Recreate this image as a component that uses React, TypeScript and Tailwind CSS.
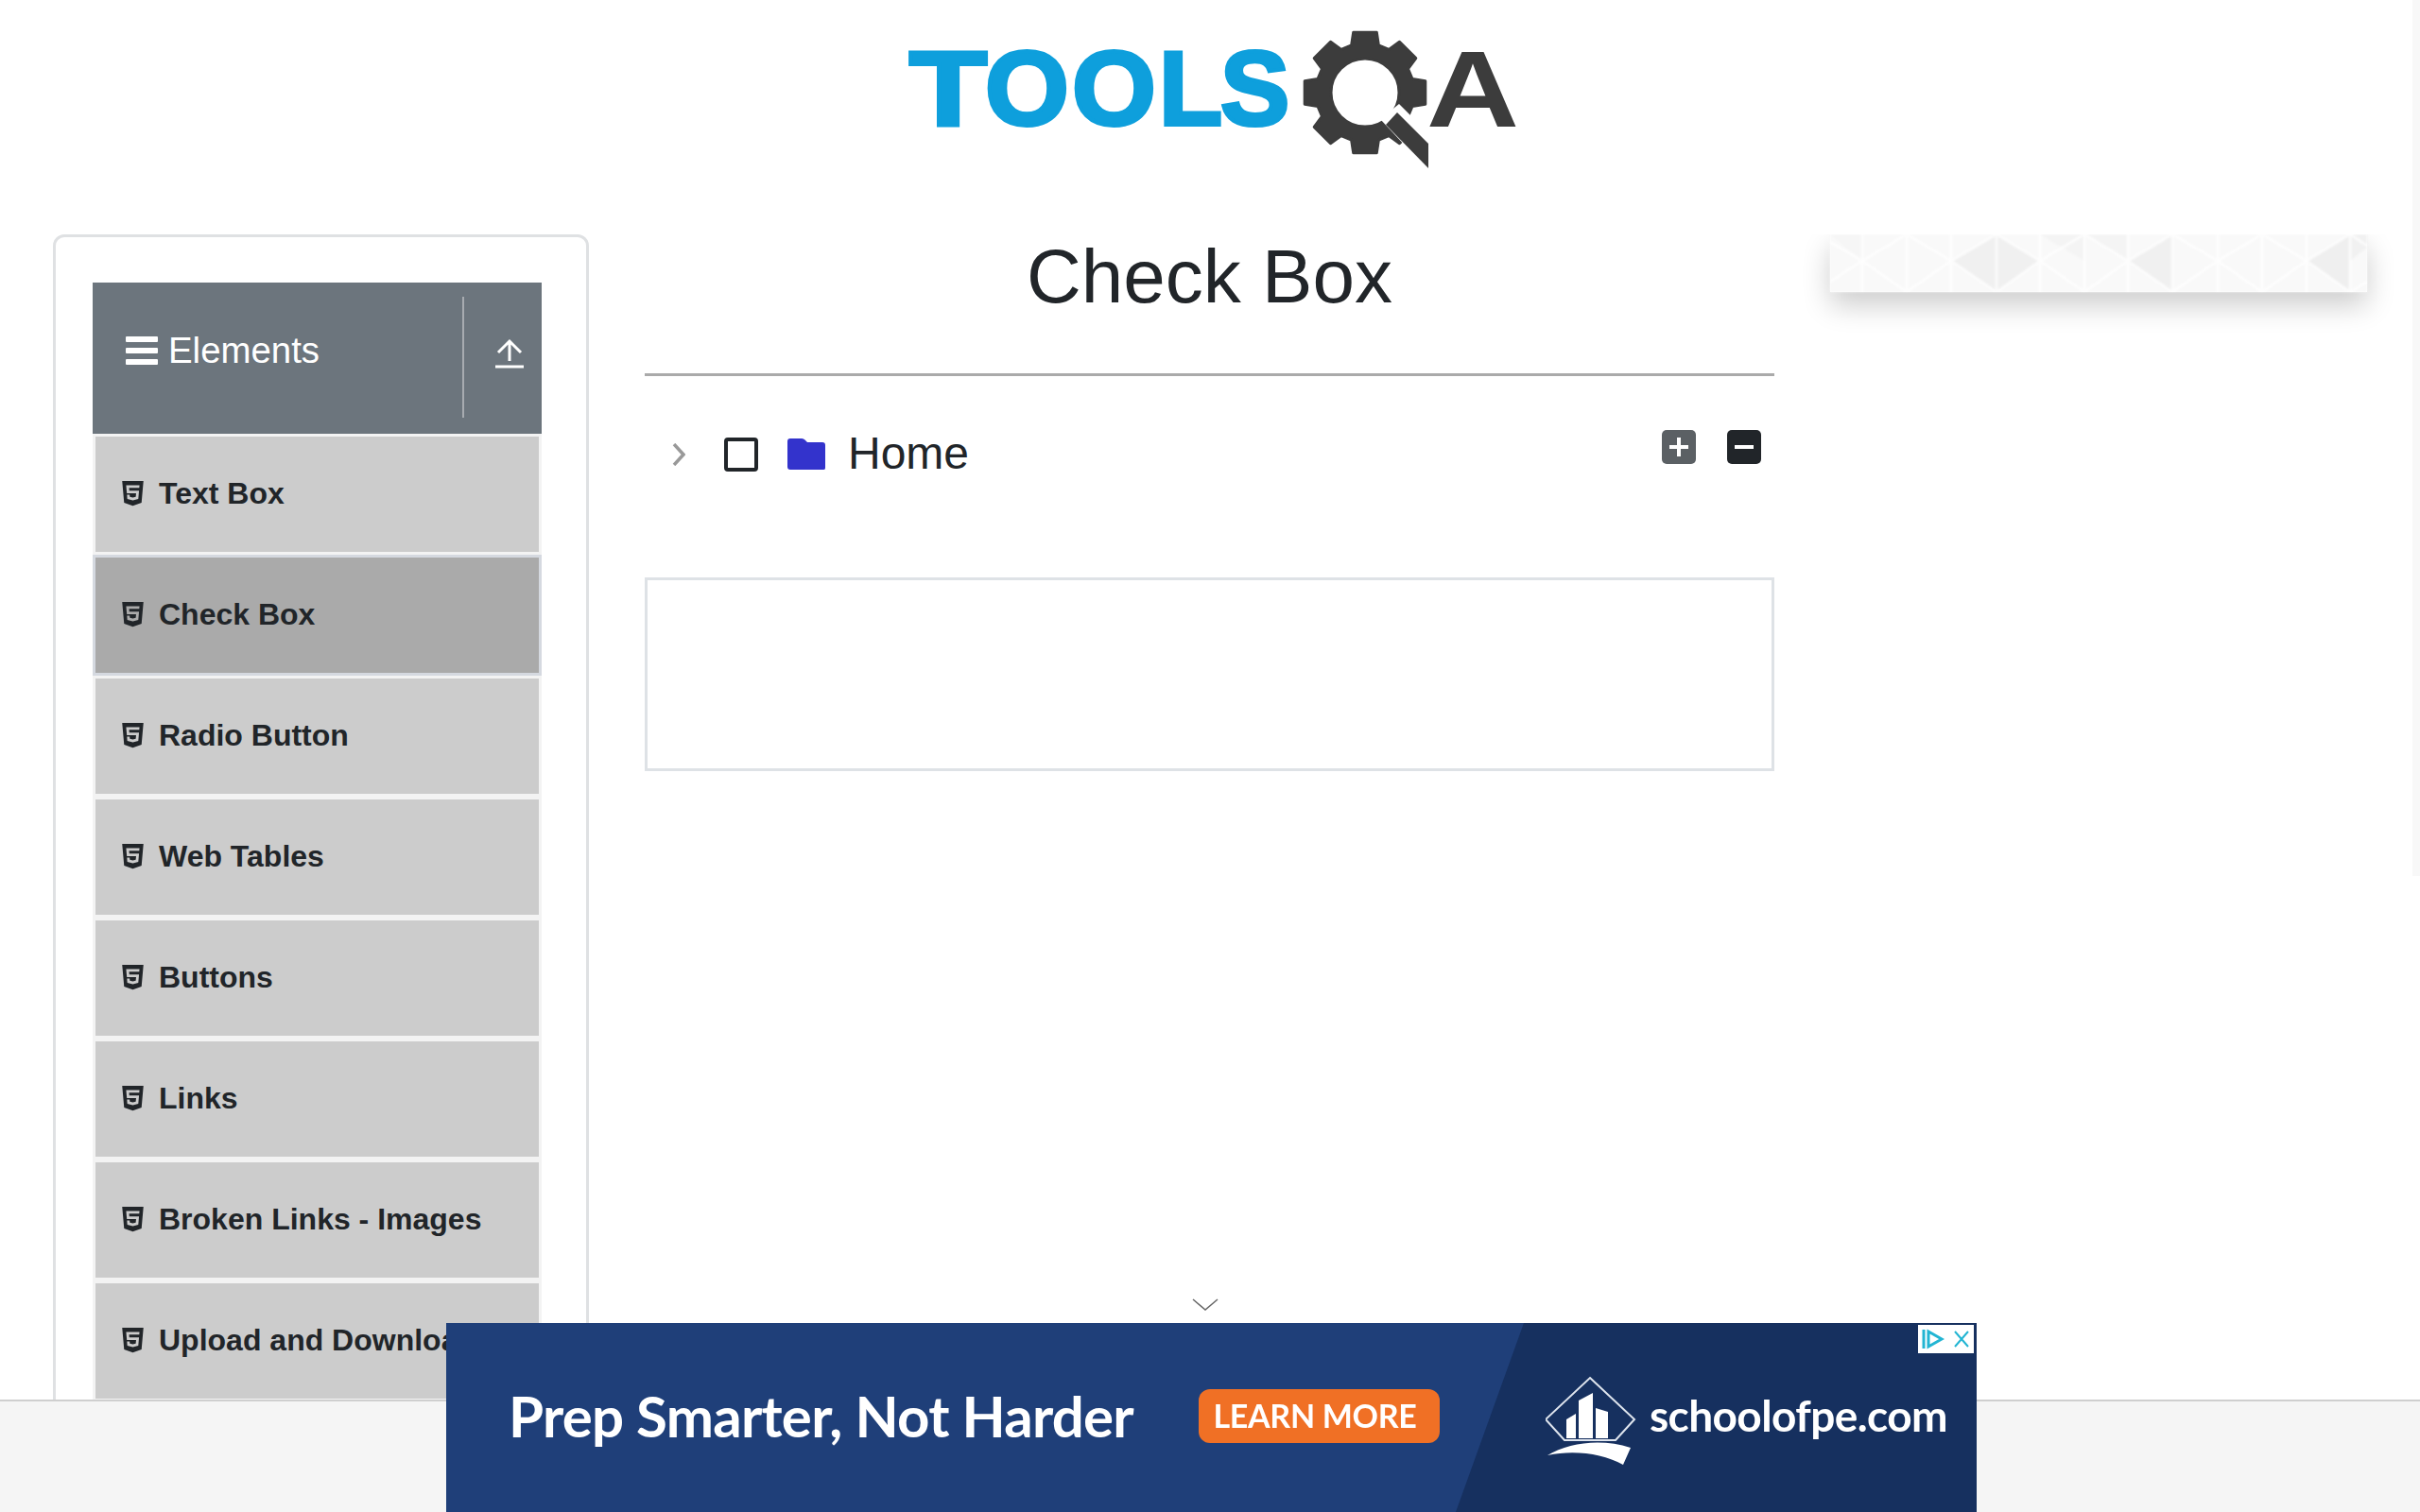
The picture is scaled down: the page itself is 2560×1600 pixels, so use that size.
import { FaHtml5 } from "react-icons/fa";

const sidebarItems = ["Text Box", "Check Box", "Radio Button", "Web Tables", "Buttons", "Links", "Broken Links - Images", "Upload and Download"];

// builds the 8 tooth cog used in the logo
function gearPath(cx: number, cy: number, outer: number, inner: number) {
  const pts: string[] = [];
  for (let i = 0; i < 8; i++) {
    const a = (i * Math.PI) / 4 - Math.PI / 2;
    const spreadOuter = 0.19;
    const spreadInner = 0.28;
    const corners = [
      [inner, a - spreadInner],
      [outer, a - spreadOuter],
      [outer, a + spreadOuter],
      [inner, a + spreadInner],
    ];
    corners.forEach(([r, t]) => pts.push(`${(cx + r * Math.cos(t)).toFixed(1)} ${(cy + r * Math.sin(t)).toFixed(1)}`));
  }
  return `M${pts.join("L")}Z M${cx - 36} ${cy}a36 36 0 1 0 72 0a36 36 0 1 0 -72 0Z`;
}

function Logo() {
  const letter = "font-['Liberation_Sans',sans-serif] font-bold";
  return (
    <svg width="700" height="160" viewBox="930 28 700 160" className="blur-[0.5px]">
      <g fill="#0e9fdc" stroke="#0e9fdc" strokeWidth="4" fontSize="112" className={letter}>
        <text transform="translate(962 132) scale(1.2 1)">T</text>
        <text transform="translate(1042 132) scale(1.02 1)">O</text>
        <text transform="translate(1134 132) scale(1.02 1)">O</text>
        <text transform="translate(1226 132) scale(0.98 1)">L</text>
        <text transform="translate(1291 132) scale(0.98 1)">S</text>
      </g>
      <path d={gearPath(1444, 98, 65, 52)} fill="#3c3c3c" fillRule="evenodd" stroke="#3c3c3c" strokeWidth="3" strokeLinejoin="round" />
      <path d="M1460 126L1480 110L1520 150L1520 190Z" fill="#fff" />
      <path d="M1466 132L1478 119L1511 152L1511 178Z" fill="#3c3c3c" />
      <text transform="translate(1509 134) scale(1.18 1)" fontSize="115" fill="#3c3c3c" className={letter}>A</text>
    </svg>
  );
}

function MenuIcon() {
  return (
    <div className="flex h-[30px] w-[34px] flex-col justify-between">
      <div className="h-[6px] rounded-[1px] bg-white" />
      <div className="h-[6px] rounded-[1px] bg-white" />
      <div className="h-[6px] rounded-[1px] bg-white" />
    </div>
  );
}

function UploadIcon() {
  return (
    <svg width="30" height="32" viewBox="0 0 30 32" fill="none" stroke="#fff" strokeWidth="3">
      <path d="M15 24V3M3 15L15 3L27 15" />
      <path d="M0 30H30" />
    </svg>
  );
}

function PatternBanner() {
  const verticals = [34, 81, 128, 176, 222, 269, 315, 362, 410, 457, 504, 550];
  return (
    <div className="h-[61px] w-[568px] shadow-[0_14px_30px_rgba(0,0,0,0.2)]">
      <svg width="568" height="61" viewBox="0 0 568 61" className="blur-[1px]">
        <rect width="568" height="61" fill="#f9f9f9" />
        <path d="M128 28L176 0L222 28L176 61Z" fill="#f0f0f0" />
        <path d="M269 0H315V28Z" fill="#f4f4f4" />
        <path d="M222 0H269V28Z" fill="#f4f4f4" />
        <path d="M315 28L362 0V61Z" fill="#f0f0f0" />
        <path d="M504 28L550 0V61Z" fill="#efefef" />
        <path d="M550 0H568V14L550 28Z" fill="#f1f1f1" />
        <path d="M0 0H34V28Z" fill="#f6f6f6" />
        <g stroke="#fff" strokeWidth="2.5" fill="none" opacity="0.85">
          {verticals.map((x) => (
            <path key={x} d={`M${x} 0V61`} />
          ))}
          <path d="M0 8L34 28L81 0L128 28L176 0L222 28L269 0L315 28L362 0L410 28L457 0L504 28L550 0L568 12" />
          <path d="M0 50L34 28L81 61L128 28L176 61L222 28L269 61L315 28L362 61L410 28L457 61L504 28L550 61L568 50" />
        </g>
      </svg>
    </div>
  );
}

function AdBanner() {
  return (
    <div className="absolute bottom-0 left-[472px] flex h-[200px] w-[1619px] items-center bg-[#1f3f79] font-['Lato',sans-serif] text-white">
      <svg width="28" height="14" viewBox="0 0 28 14" fill="none" stroke="#666" strokeWidth="1.5" className="absolute -top-[26px] left-[789px]">
        <path d="M1 1L14 12L27 1" />
      </svg>
      <div className="absolute inset-y-0 right-0 w-[551px] bg-[#16305f] [clip-path:polygon(72px_0,100%_0,100%_100%,0_100%)]" />
      <div className="absolute right-[3px] top-[2px] flex h-[30px] w-[59px] items-center justify-between bg-white px-[3px]">
        <svg width="26" height="24" viewBox="0 0 26 24" fill="none" stroke="#22b5d3" strokeWidth="3">
          <path d="M3 2V22M8 4L22 12L8 20Z" />
        </svg>
        <svg width="20" height="20" viewBox="0 0 20 20" fill="none" stroke="#22b5d3" strokeWidth="2">
          <path d="M3 2L17 18M17 2L3 18" />
        </svg>
      </div>
      <div className="relative -mt-[4px] flex items-center pl-[66px] blur-[0.6px]">
        <span className="w-[730px] text-[60px] font-bold leading-none tracking-[-0.75px]">Prep Smarter, Not Harder</span>
        <span className="flex h-[57px] w-[255px] items-center justify-center rounded-[12px] bg-[#f07025] pr-[9px] text-[34px] font-bold leading-none tracking-[-0.3px]">LEARN MORE</span>
        <svg width="100" height="96" viewBox="0 0 100 96" className="ml-[112px] mt-[12px]">
          <path d="M47 2L94 46L74 68H20L0 46Z" fill="none" stroke="#dfe5ee" strokeWidth="2" />
          <path d="M22 66V46L32 40V66ZM35 66V26L50 18V66ZM53 66V34L66 38V66Z" fill="#fff" />
          <path d="M2 84C25 70 60 66 90 76L82 94C60 82 30 78 2 84Z" fill="#fff" />
        </svg>
        <span className="ml-[10px] text-[46px] font-bold leading-none tracking-[-0.6px]">schoolofpe.com</span>
      </div>
    </div>
  );
}

export default function App() {
  return (
    <div className="relative flex h-[1600px] flex-col overflow-hidden bg-white font-['Liberation_Sans',sans-serif] text-[#212529]">
      <div className="absolute right-0 top-0 h-[927px] w-[8px] bg-[#f8f8f8]" />

      <header className="flex h-[248px] shrink-0 justify-center pt-[28px]">
        <Logo />
      </header>

      <div className="flex min-h-0 flex-1 items-start overflow-hidden pl-[56px]">
        <aside className="w-[567px] shrink-0 rounded-xl border-[3px] border-[#dfe1e3] pb-[47px] pl-[39px] pr-[47px] pt-[48px]">
          <div className="flex h-[160px] items-start bg-[#6c757d] text-white">
            <div className="flex h-[144px] w-[391px] items-center gap-[11px] pl-[35px]">
              <MenuIcon />
              <span className="text-[38.4px] leading-none">Elements</span>
            </div>
            <div className="mt-[15px] h-[128px] w-[2px] bg-[#a7abb0]" />
            <div className="flex h-[150px] flex-1 items-center justify-center pl-[14px]">
              <UploadIcon />
            </div>
          </div>
          {sidebarItems.map((item) => (
            <div
              key={item}
              className={`flex h-[128px] items-center gap-[16px] border-[3px] pb-[2px] pl-[28px] text-[32px] font-bold ${
                item === "Check Box" ? "border-[#d5d9e0] bg-[#aaaaaa]" : "border-[#f3f3f3] bg-[#cccccc]"
              }`}
            >
              <FaHtml5 className="h-[30px] w-[23px] shrink-0" />
              <span className="whitespace-nowrap">{item}</span>
            </div>
          ))}
        </aside>

        <main className="ml-[59px] w-[1195px] shrink-0">
          <h1 className="h-[147px] text-center text-[80px] leading-[90px]">Check Box</h1>
          <div className="h-[3px] bg-[#aaaaaa]" />
          <div className="relative flex h-[213px] items-start pt-[65px]">
            <svg width="14" height="24" viewBox="0 0 14 24" fill="none" stroke="#999" strokeWidth="3.5" className="ml-[29px] mt-[6px]">
              <path d="M2 1L12 12L2 23" />
            </svg>
            <div className="ml-[41px] h-[36px] w-[36px] rounded-[4px] border-[4px] border-[#212529]" />
            <svg width="40" height="34" viewBox="0 0 40 34" className="ml-[31px] mt-[1px]">
              <path d="M3 0H15C17 0 18 1 19 2L21 4H37C39 4 40 5 40 7V31C40 33 39 33 37 33H3C1 33 0 32 0 30V3C0 1 1 0 3 0Z" fill="#3333cc" />
            </svg>
            <span className="ml-[24px] -mt-[11px] text-[48px] leading-[55px]">Home</span>
            <div className="ml-auto -mt-[8px] mr-[14px] flex gap-[33px]">
              <button className="flex h-[36px] w-[36px] items-center justify-center rounded-[5px] bg-[#5b6064]">
                <svg width="20" height="20" viewBox="0 0 20 20" fill="#fff">
                  <path d="M8 0H12V8H20V12H12V20H8V12H0V8H8Z" />
                </svg>
              </button>
              <button className="flex h-[36px] w-[36px] items-center justify-center rounded-[5px] bg-[#212529]">
                <svg width="20" height="4" viewBox="0 0 20 4" fill="#fff">
                  <rect width="20" height="4" />
                </svg>
              </button>
            </div>
          </div>
          <div className="h-[205px] border-[3px] border-[#dee2e6]" />
        </main>

        <div className="ml-[59px]">
          <PatternBanner />
        </div>
      </div>

      <footer className="h-[119px] shrink-0 border-t-[2px] border-[#cfcfcf] bg-[#f5f5f5]" />
      <AdBanner />
    </div>
  );
}
